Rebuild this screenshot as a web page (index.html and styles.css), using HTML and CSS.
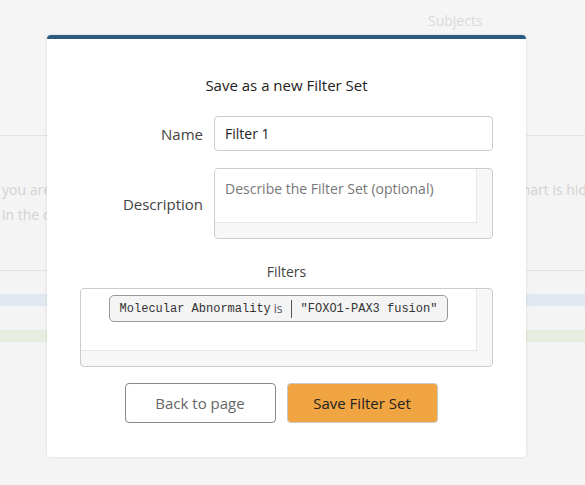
FILE: index.html
```html
<!DOCTYPE html>
<html>
<head>
<meta charset="utf-8">
<link rel="stylesheet" href="styles.css">
</head>
<body>
<div class="page">
  <div class="page-head">
    <span class="tab">Subjects</span>
  </div>
  <div class="page-info">
    <div class="info-row"><span class="info-left">you are</span><span class="info-right">chart is hid</span></div>
    <div class="info-row"><span class="info-left">in the chart</span></div>
  </div>
  <div class="page-table">
    <div class="row-gap1"></div>
    <div class="band blue"></div>
    <div class="row-gap2"></div>
    <div class="band green"></div>
  </div>
</div>

<div class="modal">
  <h2 class="modal-title">Save as a new Filter Set</h2>
  <div class="form-row name-row">
    <label class="form-label">Name</label>
    <div class="input">Filter 1</div>
  </div>
  <div class="form-row desc-row">
    <label class="form-label">Description</label>
    <div class="scroll-box desc-box">
      <div class="scroll-content desc-content"><span class="placeholder">Describe the Filter Set (optional)</span></div>
      <div class="vbar"></div>
      <div class="hbar"></div>
    </div>
  </div>
  <div class="filters-label">Filters</div>
  <div class="scroll-box filter-box">
    <div class="scroll-content filter-content">
      <div class="pill">
        <span class="mono">Molecular Abnormality</span><span class="op">is</span><span class="divider"></span><span class="mono">"FOXO1-PAX3 fusion"</span>
      </div>
    </div>
    <div class="vbar"></div>
    <div class="hbar"></div>
  </div>
  <div class="actions">
    <button class="btn btn-back">Back to page</button>
    <button class="btn btn-save">Save Filter Set</button>
  </div>
</div>
</body>
</html>
```

FILE: styles.css
```css
html, body {
  margin: 0;
  padding: 0;
}
body {
  width: 585px;
  height: 485px;
  overflow: hidden;
  background: #f4f4f4;
  font-family: "Open Sans", "Lato", sans-serif;
  position: relative;
}
.page {
  width: 585px;
}
.page-head {
  height: 136px;
  border-bottom: 1px solid #e3e3e3;
  background: #f5f5f5;
  box-sizing: border-box;
  padding-top: 9px;
  padding-left: 428px;
}
.tab {
  color: #dadada;
  font-size: 14px;
}
.page-info {
  height: 135px;
  border-bottom: 1px solid #e3e3e3;
  box-sizing: border-box;
  padding-top: 44px;
  color: #d2d2d2;
  font-size: 14px;
}
.info-row {
  display: flex;
  height: 25px;
  line-height: 20px;
  white-space: nowrap;
}
.info-left {
  padding-left: 2px;
  width: 513px;
  flex: none;
}
.info-right {
  flex: none;
}
.page-table {
  display: flex;
  flex-direction: column;
}
.row-gap1 { height: 23px; }
.row-gap2 { height: 24px; }
.band { height: 12px; }
.band.blue { background: #e1e8ef; }
.band.green { background: #e7eedf; }

.modal {
  position: absolute;
  left: 47px;
  top: 35px;
  width: 479px;
  height: 422px;
  box-sizing: border-box;
  background: #fff;
  border-top: 4px solid #2b5b80;
  border-radius: 4px;
  box-shadow: 0 0 3px rgba(0,0,0,0.12);
  display: flex;
  flex-direction: column;
}
.modal-title {
  margin: 36px 0 0;
  height: 20px;
  line-height: 20px;
  font-size: 15px;
  font-weight: 400;
  color: #222;
  text-align: center;
}
.form-row {
  display: flex;
  align-items: center;
}
.name-row {
  margin-top: 21px;
}
.form-label {
  width: 167px;
  flex: none;
  text-align: right;
  padding-right: 11px;
  box-sizing: border-box;
  color: #444;
  font-size: 15px;
}
.input {
  width: 279px;
  height: 35px;
  box-sizing: border-box;
  border: 1px solid #ccc;
  border-radius: 4px;
  padding: 0 10px;
  line-height: 33px;
  font-size: 14px;
  color: #222;
}
.desc-row {
  margin-top: 17px;
}
.scroll-box {
  position: relative;
  box-sizing: border-box;
  border: 1px solid #ccc;
  border-radius: 4px;
  background: #f7f7f7;
  display: grid;
  grid-template-columns: 1fr 15px;
  grid-template-rows: 1fr 15px;
  overflow: hidden;
}
.scroll-content {
  background: #fff;
  border-right: 1px solid #e8e8e8;
  border-bottom: 1px solid #e8e8e8;
}
.desc-box {
  width: 279px;
  height: 71px;
}
.desc-content {
  padding: 8px 10px 0;
}
.placeholder {
  color: #777;
  font-size: 14px;
}
.filters-label {
  margin-top: 23px;
  text-align: center;
  color: #444;
  font-size: 14px;
  height: 20px;
  line-height: 20px;
}
.filter-box {
  margin: 6px 0 0 33px;
  width: 413px;
  height: 79px;
}
.filter-content {
  display: flex;
  justify-content: center;
  align-items: flex-start;
  padding-top: 6px;
}
.pill {
  display: flex;
  align-items: center;
  height: 27px;
  box-sizing: border-box;
  border: 1px solid #999;
  border-radius: 5px;
  background: #f4f4f4;
  padding: 0 10px;
  font-size: 12px;
  color: #333;
}
.mono {
  font-family: "Liberation Mono", "DejaVu Sans Mono", monospace;
  font-size: 12px;
}
.op {
  margin-left: 3px;
  color: #555;
  font-size: 12px;
}
.divider {
  width: 1px;
  height: 18px;
  background: #555;
  margin: 0 9px 0 8px;
}
.actions {
  display: flex;
  justify-content: center;
  gap: 11px;
  margin-top: 16px;
  padding-right: 11px;
}
.btn {
  width: 151px;
  height: 40px;
  box-sizing: border-box;
  border-radius: 4px;
  font-family: inherit;
  font-size: 15px;
  cursor: pointer;
}
.btn-back {
  background: #fff;
  border: 1px solid #888;
  color: #666;
}
.btn-save {
  background: #f0a542;
  border: 1px solid #c9c9c9;
  color: #222;
}
```
